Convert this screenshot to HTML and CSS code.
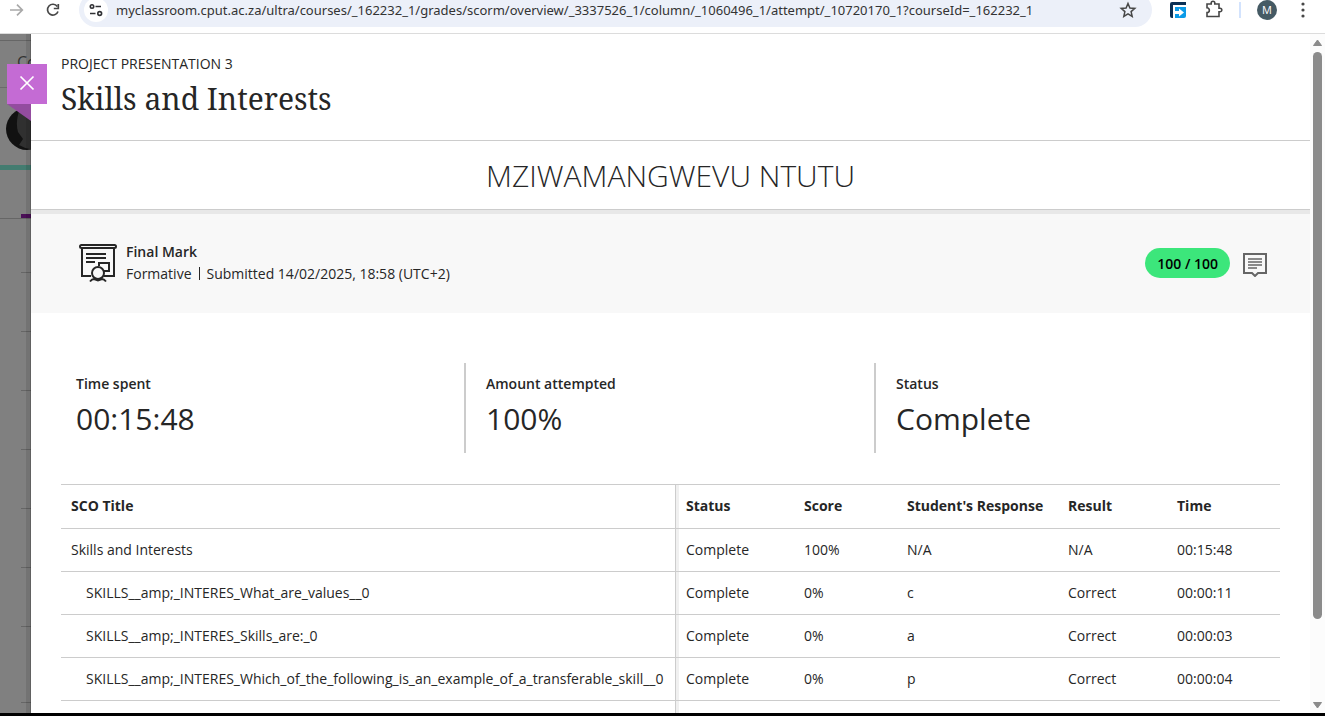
FILE: index.html
```html
<!DOCTYPE html>
<html lang="en">
<head>
<meta charset="utf-8">
<title>Skills and Interests</title>
<link rel="stylesheet" href="styles.css">
</head>
<body>
<header class="browser">
  <div class="toolbar">
    <button class="tool forward" aria-label="Forward"><svg width="20" height="20" viewBox="0 0 20 20" fill="none" stroke="#a9a9a9" stroke-width="1.7"><path d="M3 10H15M10 4.700L15.300 10L10 15.300"/></svg></button>
    <button class="tool reload" aria-label="Reload"><svg width="20" height="20" viewBox="0 0 20 20" fill="none" stroke="#474747" stroke-width="1.700"><path d="M15 11.500A5.400 5.400 0 1 1 14.300 6.500"/><path d="M15.300 4V8.500H10.800" /></svg></button>
    <div class="address">
      <button class="site-info" aria-label="View site information"><svg width="18" height="18" viewBox="0 0 18 18" fill="none" stroke="#303134" stroke-width="1.600"><circle cx="5" cy="5.500" r="1.700"/><path d="M8.500 5.500H14M3 12.500H8.500"/><circle cx="12.700" cy="12.500" r="1.900"/></svg></button>
      <input class="url" type="text" aria-label="Address" value="myclassroom.cput.ac.za/ultra/courses/_162232_1/grades/scorm/overview/_3337526_1/column/_1060496_1/attempt/_10720170_1?courseId=_162232_1">
      <button class="tool" aria-label="Bookmark this page"><svg width="18" height="18" viewBox="0 0 18 18" fill="none" stroke="#474747" stroke-width="1.500"><path d="M9 2.500L10.900 7L15.800 7.400L12.100 10.600L13.200 15.400L9 12.900L4.800 15.400L5.900 10.600L2.200 7.400L7.100 7Z"/></svg></button>
    </div>
    <div class="extensions">
      <button class="tool" aria-label="Extension"><svg width="16" height="16" viewBox="0 0 16 16"><path d="M0 2Q0 0 2 0H16V3H3V16H2Q0 16 0 14Z" fill="#0b3055"/><path d="M5 5H16V14Q16 16 14 16H5Z" fill="#0c9be8"/><path d="M5 9H9V6.500L14 10.500L9 14.500V12H5Z" fill="#fff"/></svg></button>
      <button class="tool" aria-label="Extensions"><svg width="20" height="20" viewBox="0 0 20 20" fill="none" stroke="#474747" stroke-width="1.600"><path d="M3 4H7.200V3A1.500 1.500 0 0 1 10.800 3V4H15V8.200H16A1.500 1.500 0 0 1 16 11.800H15V16.500H3V12.500A2.300 2.300 0 0 0 3 7.800Z"/></svg></button>
      <span class="divider"></span>
      <button class="profile" aria-label="Profile">M</button>
      <button class="tool" aria-label="Menu"><svg width="16" height="16" viewBox="0 0 16 16" fill="#474747"><circle cx="8" cy="2" r="1.600"/><circle cx="8" cy="8" r="1.600"/><circle cx="8" cy="14" r="1.600"/></svg></button>
    </div>
  </div>
</header>

<div class="viewport">
  <aside class="backdrop">
    <div class="back-top"></div>
    <div class="back-title">Co</div>
    <div class="back-user"><svg width="42" height="42" viewBox="0 0 42 42"><circle cx="21" cy="21" r="21" fill="#111"/><path d="M14 0Q9 14 12 24L17 31L13 37Q24 44 42 40V0Z" fill="#303030"/></svg></div>
    <div class="back-nav"></div>
    <div class="back-row first"></div>
    <div class="back-row"></div>
    <div class="back-row"></div>
    <div class="back-row"></div>
    <div class="back-row"></div>
    <div class="back-row"></div>
    <div class="back-row"></div>
    <div class="back-row tall"></div>
    <div class="edge-shadow"></div>
    <div class="ribbon">
      <button class="close" aria-label="Close"><svg width="16" height="16" viewBox="0 0 16 16" fill="none" stroke="#fff" stroke-width="1.700"><path d="M1.500 1.500L14.500 14.500M14.500 1.500L1.500 14.500"/></svg></button>
      <svg class="fold" width="24" height="17" viewBox="0 0 24 17"><path d="M0 0H24V17Z" fill="#934c9f"/></svg>
    </div>
  </aside>

  <main class="panel">
    <header class="heading">
      <p class="course">PROJECT PRESENTATION 3</p>
      <h1 class="title">Skills and Interests</h1>
    </header>
    <h2 class="student">MZIWAMANGWEVU NTUTU</h2>
    <section class="attempt">
      <svg class="attempt-icon" width="38" height="40" viewBox="0 0 38 40" fill="none" stroke="#262626" stroke-width="2"><rect x="1" y="2" width="36" height="3" rx="1.500"/><path d="M3 5V33H12M25 33H35V5M7 11H27M7 15H27M7 19H16M20 23V20H30V28H25"/><circle cx="19" cy="30" r="6"/><path d="M11 38.500Q13 36 15 36L19 37.500L23 36Q25 36 27 38.500"/></svg>
      <div class="attempt-text">
        <h3 class="mark">Final Mark</h3>
        <p class="details"><span>Formative</span><span class="rule"></span><span>Submitted 14/02/2025, 18:58 (UTC+2)</span></p>
      </div>
      <span class="grade">100 / 100</span>
      <button class="feedback" aria-label="Feedback"><svg width="24" height="24" viewBox="0 0 24 24" fill="none" stroke="#666" stroke-width="2"><path d="M1 1H23V20H15L12 23L9 20H1Z"/><path d="M5 6H19M5 9H19M5 12H19M5 15H14" stroke-width="1.700"/></svg></button>
    </section>
    <dl class="stats">
      <div class="stat"><dt>Time spent</dt><dd>00:15:48</dd></div>
      <div class="stat"><dt>Amount attempted</dt><dd>100%</dd></div>
      <div class="stat"><dt>Status</dt><dd>Complete</dd></div>
    </dl>
    <div class="table-area">
      <table class="results">
        <colgroup><col><col class="c-status"><col class="c-score"><col class="c-response"><col class="c-result"><col class="c-time"></colgroup>
        <thead><tr><th>SCO Title</th><th>Status</th><th>Score</th><th>Student's Response</th><th>Result</th><th>Time</th></tr></thead>
        <tbody>
          <tr><td>Skills and Interests</td><td>Complete</td><td>100%</td><td>N/A</td><td>N/A</td><td>00:15:48</td></tr>
          <tr class="child"><td>SKILLS__amp;_INTERES_What_are_values__0</td><td>Complete</td><td>0%</td><td>c</td><td>Correct</td><td>00:00:11</td></tr>
          <tr class="child"><td>SKILLS__amp;_INTERES_Skills_are:_0</td><td>Complete</td><td>0%</td><td>a</td><td>Correct</td><td>00:00:03</td></tr>
          <tr class="child"><td>SKILLS__amp;_INTERES_Which_of_the_following_is_an_example_of_a_transferable_skill__0</td><td>Complete</td><td>0%</td><td>p</td><td>Correct</td><td>00:00:04</td></tr>
          <tr class="child"><td></td><td></td><td></td><td></td><td></td><td></td></tr>
        </tbody>
      </table>
    </div>
  </main>

  <div class="scrollbar">
    <svg width="9" height="7" viewBox="0 0 9 7"><path d="M4.500 1L8.500 6.500H.5Z" fill="#8b8b8b" stroke="#8b8b8b" stroke-linejoin="round"/></svg>
    <div class="track"><div class="thumb"></div></div>
    <svg width="9" height="7" viewBox="0 0 9 7"><path d="M4.500 6L8.500 .5H.5Z" fill="#8b8b8b" stroke="#8b8b8b" stroke-linejoin="round"/></svg>
  </div>
</div>
</body>
</html>
```
FILE: styles.css
```css
* { box-sizing: border-box; }
body {
  margin: 0;
  height: 100vh;
  overflow: hidden;
  display: flex;
  flex-direction: column;
  border-bottom: 3px solid #000;
  background: #fff;
  color: #262626;
  font: 14px/20px "Open Sans", "Noto Sans", sans-serif;
}
button { border: 0; padding: 0; background: none; font: inherit; color: inherit; }
h1, h2, h3, p, dl, dd { margin: 0; font-weight: 400; }
svg { display: block; flex: none; }

.browser { flex: none; height: 34px; overflow: hidden; border-bottom: 1px solid #dcdcdc; }
.toolbar { display: flex; align-items: center; height: 34px; margin-top: -7px; padding: 0 14px 0 7px; }
.tool { flex: none; display: flex; }
.reload { margin: 0 16px; }
.address { flex: 1; display: flex; align-items: center; height: 34px; padding: 0 15px 0 5px; border-radius: 17px; background: #ecf0f9; }
.site-info { flex: none; display: grid; place-items: center; width: 24px; height: 24px; border-radius: 12px; background: #fff; }
.url { flex: 1; min-width: 0; height: 24px; margin-left: 8px; padding: 0; border: 0; background: none; color: #333; font: 13px/20px "Noto Sans", "Open Sans", sans-serif; }
.extensions { display: flex; align-items: center; margin-left: 18px; }
.extensions .tool + .tool { margin-left: 18px; }
.divider { width: 2px; height: 16px; margin: 0 16px 0 15px; background: #d3e3fd; }
.profile { width: 20px; height: 20px; margin-right: 18px; border-radius: 10px; background: #455a64; color: #fff; font-size: 11px; line-height: 20px; }

.viewport { flex: 1; min-height: 0; display: grid; grid-template-columns: 31px minmax(0, 1fr) 15px; }

.backdrop { position: relative; min-height: 0; background: #808080; color: #333; }
.back-top { height: 7px; border-bottom: 1px solid #666; }
.back-title { height: 47px; padding: 11px 0 0 17px; border-bottom: 1px solid #6b6b6b; font-size: 16px; overflow: hidden; }
.back-user { height: 82px; padding: 20px 0 0 6px; border-bottom: 5px solid #437c70; overflow: hidden; }
.back-nav { height: 49px; border-bottom: 1px solid #666; background: linear-gradient(#4b1057, #4b1057) 21px 100% / 10px 4px no-repeat; }
.back-row { height: 59px; margin-left: 21px; border-bottom: 1px solid #666; }
.back-row.first { height: 54px; }
.back-row.tall { height: 76px; }
.edge-shadow { position: absolute; inset: 0 0 0 auto; width: 5px; border-right: 1px solid rgba(0, 0, 0, .15); background: rgba(0, 0, 0, .1); }
.ribbon { position: absolute; top: 30px; left: 7px; z-index: 2; }
.close { display: grid; place-items: center; width: 40px; height: 40px; padding-bottom: 2px; background: #c46bd4; }

.panel { min-height: 0; overflow: hidden; }
.heading { padding: 20px 30px; height: 107px; border-bottom: 1px solid #ccc; }
.title { font: 30px/40px "Noto Serif", "Droid Serif", "Liberation Serif", serif; margin-top: 5px; }
.student { height: 73px; padding-top: 15px; text-align: center; font-size: 30px; line-height: 40px; font-weight: 300; background: linear-gradient(#ccc 1px, #e8e8e8 1px) bottom / 100% 5px no-repeat; }
.attempt { display: flex; align-items: center; height: 99px; padding: 0 43px 2px 48px; background: #f8f8f8; }
.attempt-text { flex: 1; margin-left: 9px; }
.mark { font-size: 14px; font-weight: 600; line-height: 22px; }
.details { display: flex; align-items: center; line-height: 22px; }
.rule { width: 1px; height: 13px; margin: 0 7px; background: #262626; }
.grade { height: 30px; padding: 0 12px; border-radius: 15px; background: #3ce67b; color: #000; font-weight: 600; line-height: 32px; }
.feedback { margin-left: 13px; padding-top: 4px; }

.stats { display: grid; grid-template-columns: repeat(3, 1fr); margin: 50px 26px 31px 23px; }
.stat { height: 90px; padding: 11px 20px; border-left: 2px solid #ccc; }
.stat:first-child { border-color: transparent; }
.stat dt { font-weight: 600; }
.stat dd { margin-top: 5px; font-size: 30px; line-height: 40px; }

.table-area { padding: 0 30px; }
.results { width: 100%; table-layout: fixed; border-collapse: separate; border-spacing: 0; border-top: 1px solid #ccc; }
.c-status { width: 118px; }
.c-score { width: 103px; }
.c-response { width: 161px; }
.c-result { width: 109px; }
.c-time { width: 113px; }
.results th, .results td { height: 43px; padding: 0 10px; border-bottom: 1px solid #ccc; text-align: left; white-space: nowrap; }
.results th { height: 44px; padding-bottom: 2px; font-weight: 700; }
.results th:first-child, .results td:first-child { border-right: 1px solid #ccc; }
.results th:nth-child(2), .results td:nth-child(2) { background: linear-gradient(#f0f0f0, #f0f0f0) left / 3px 100% no-repeat; }
.results .child td:first-child { padding-left: 25px; }

.scrollbar { display: flex; flex-direction: column; align-items: center; padding: 5px 0 4px; background: #fcfcfc; }
.track { flex: 1; width: 9px; margin: 6px 0; }
.thumb { height: 88%; border-radius: 5px; background: #8b8b8b; }
```
